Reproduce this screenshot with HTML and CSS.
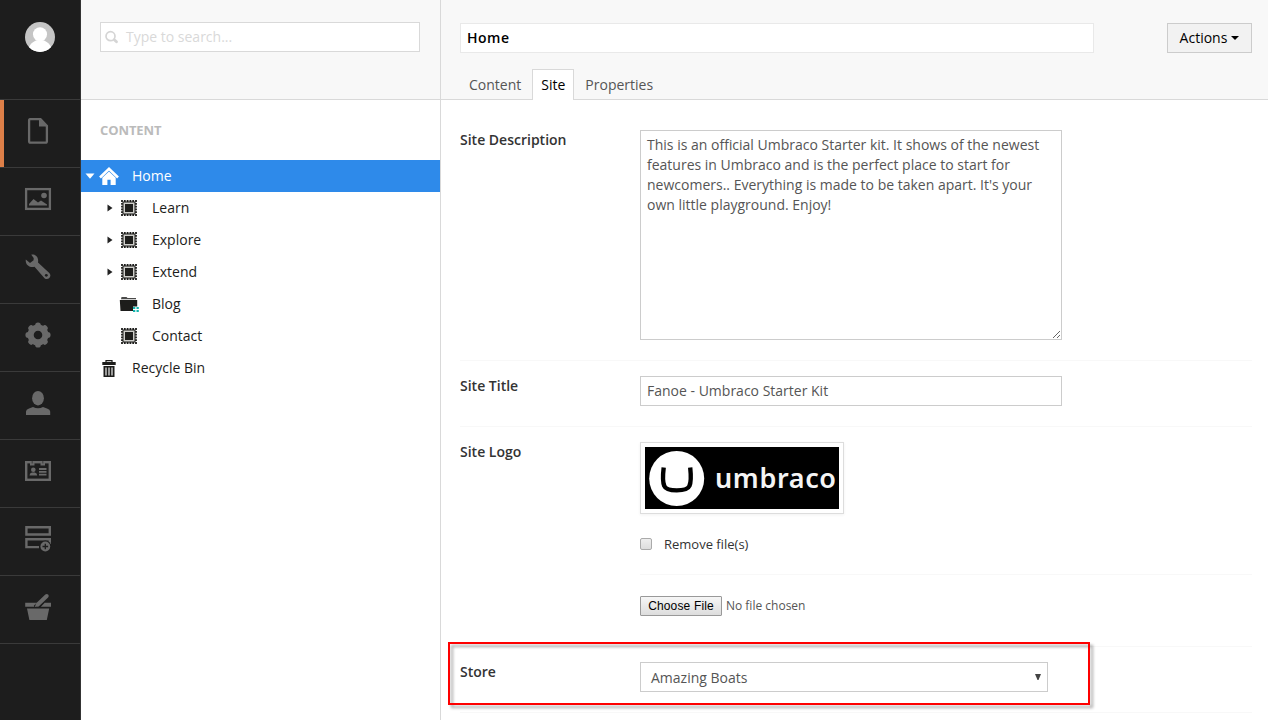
FILE: index.html
```html
<!DOCTYPE html>
<html lang="en">
<head>
<meta charset="utf-8">
<title>Home - Content</title>
<link rel="stylesheet" href="styles.css">
</head>
<body>
<div class="app">
  <nav class="rail">
    <div class="rail-user">
      <svg class="avatar" viewBox="0 0 30 30"><defs><clipPath id="disc"><circle cx="15" cy="15" r="15"/></clipPath></defs><g clip-path="url(#disc)"><rect width="30" height="30" fill="#c5c5c5"/><path d="M3 30C3 24 6.500 20.500 11.300 18.300L18.700 18.300C23.500 20.500 27 24 27 30Z" fill="#fff"/><ellipse cx="15" cy="12.200" rx="7" ry="7" fill="#fff"/></g></svg>
    </div>
    <a class="rail-item active"><svg class="rail-icon" viewBox="0 0 28 28"><path d="M6 2.200H16.500L22.900 9V24.200Q22.900 25.600 21.500 25.600H6.500Q5.100 25.600 5.100 24.200V3.200Q5.100 2.200 6 2.200Z" fill="none" stroke="#696969" stroke-width="2.300"/><path d="M15 1.500L23.500 9.500H18L15 9.500Z" fill="#696969"/></svg></a>
    <a class="rail-item"><svg class="rail-icon" viewBox="0 0 28 28"><rect x="2.100" y="4.100" width="23.800" height="19.800" fill="none" stroke="#696969" stroke-width="2.300"/><circle cx="20" cy="10.500" r="2.800" fill="#696969"/><path d="M5 20.500V19L9.500 14L14 17.500L17 15.500L23 19.500V20.500Z" fill="#696969"/></svg></a>
    <a class="rail-item"><svg class="rail-icon" viewBox="0 0 28 28"><path d="M7.300 1.700C11.500 1 15 4.500 14 9.500L25.300 20C28.500 23.500 24 28 20.500 25.300L10.500 13.800C5.500 15 1 11.500 1.800 6.500L6 10L9.600 7.200L9.700 5Z" fill="#696969"/><circle cx="22.300" cy="22.300" r="1.400" fill="#1d1d1d"/></svg></a>
    <a class="rail-item"><svg class="rail-icon" viewBox="0 0 28 28"><circle cx="14" cy="14" r="7.400" fill="none" stroke="#696969" stroke-width="6.200"/><g stroke="#696969" stroke-width="5.800" stroke-linecap="round"><path d="M14 4.300V6M14 22V23.700M4.300 14H6M22 14H23.700M7.200 7.200L8 8M20 20L20.800 20.800M7.200 20.800L8 20M20 8L20.800 7.200"/></g></svg></a>
    <a class="rail-item"><svg class="rail-icon" viewBox="0 0 28 28"><ellipse cx="14" cy="9.200" rx="5.900" ry="7.200" fill="#696969"/><path d="M2 26V22.500Q2 20.500 5 19.500L9 18Q14 20.500 19 18L23 19.500Q26.200 20.500 26.200 22.500V26Z" fill="#696969"/></svg></a>
    <a class="rail-item"><svg class="rail-icon" viewBox="0 0 28 28"><rect x="2.200" y="5.200" width="23.600" height="17.600" fill="none" stroke="#696969" stroke-width="2.400"/><path d="M6 4H10.500V8.500H6ZM16.500 4H21V8.500H16.500Z" fill="#696969"/><path d="M7.500 4V6.500H9V4ZM18 4V6.500H19.500V4Z" fill="#1d1d1d" opacity=".4"/><circle cx="9.300" cy="12.800" r="2.300" fill="#696969"/><path d="M5.500 18.500Q5.500 16 8 15.500H10.800Q13.200 16 13.200 18.500ZM15 11H22.500V12.900H15ZM15 13.900H22.500V15.700H15ZM15 16.700H22.500V18.500H15Z" fill="#696969"/></svg></a>
    <a class="rail-item"><svg class="rail-icon" viewBox="0 0 28 28"><path d="M2.400 2.300H25.800V9.500H2.400ZM25.800 19V14.300H2.400V22.100H15" fill="none" stroke="#696969" stroke-width="2.400"/><circle cx="21.300" cy="21.500" r="5.900" fill="#1d1d1d"/><circle cx="21.300" cy="21.500" r="4.900" fill="#696969"/><path d="M18.500 21.500H24.100M21.300 18.700V24.300" stroke="#1d1d1d" stroke-width="1.300"/></svg></a>
    <a class="rail-item"><svg class="rail-icon" viewBox="0 0 28 28"><path d="M1.200 9.700H14L10 13.800H1.200ZM20.700 9.700H27V13.800H16.900ZM3 15.500H25.200L22.800 27H5.400Z" fill="#696969"/><path d="M10.500 13.500L22.700 1.500" stroke="#1d1d1d" stroke-width="2"/><path d="M22.700 3L13.800 11.500" stroke="#696969" stroke-width="4" stroke-linecap="round"/><path d="M10.800 14L12.300 10L15.300 13Z" fill="#696969"/></svg></a>
  </nav>

  <aside class="tree-panel">
    <div class="tree-head">
      <div class="search"><svg class="search-icon" viewBox="0 0 14 14"><circle cx="5.500" cy="6.200" r="4.500" fill="none" stroke="#d5d5d5" stroke-width="1.700"/><path d="M9.300 9.700L11.500 11.800" stroke="#d5d5d5" stroke-width="2.800" stroke-linecap="round"/></svg><span>Type to search...</span></div>
    </div>
    <h5 class="tree-title">CONTENT</h5>
    <ul class="tree">
      <li class="node root selected"><svg class="caret" viewBox="0 0 10 10"><path d="M.500 2.500H9.500L5 7.700Z" fill="#fff"/></svg><svg class="node-icon" viewBox="0 0 20 20"><path d="M1 11.500L10 2.800L19 11.500" fill="none" stroke="#fff" stroke-width="2.600"/><path d="M3.300 11.800L10 5.500L16.700 11.800V19H11.600V13.800H8.400V19H3.300Z" fill="#fff"/></svg><span>Home</span></li>
      <li class="node child"><svg class="caret" viewBox="0 0 10 10"><path d="M2.500 1.500L7.500 5L2.500 8.500Z" fill="#222"/></svg><svg class="node-icon" viewBox="0 0 20 20"><use href="#stamp"/></svg><span>Learn</span></li>
      <li class="node child"><svg class="caret" viewBox="0 0 10 10"><path d="M2.500 1.500L7.500 5L2.500 8.500Z" fill="#222"/></svg><svg class="node-icon" viewBox="0 0 20 20"><use href="#stamp"/></svg><span>Explore</span></li>
      <li class="node child"><svg class="caret" viewBox="0 0 10 10"><path d="M2.500 1.500L7.500 5L2.500 8.500Z" fill="#222"/></svg><svg class="node-icon" viewBox="0 0 20 20"><use href="#stamp"/></svg><span>Extend</span></li>
      <li class="node child"><i class="caret"></i><svg class="node-icon" viewBox="0 0 20 20"><path d="M2.500 3H7.500L8.500 4H17V5.200H2Z" fill="#1d1d1b" opacity=".8"/><path d="M.800 6H18.200V12.500H14V17H1.500Z" fill="#1d1d1b"/><path d="M14 13H16.300V15H14ZM17.500 13H19.800V15H17.500ZM14 16H16.300V18H14ZM17.500 16H19.800V18H17.500Z" fill="#14b5ad"/></svg><span>Blog</span></li>
      <li class="node child"><i class="caret"></i><svg class="node-icon" viewBox="0 0 20 20"><g id="stamp"><rect x="4" y="4" width="12" height="12" fill="#d0d0cc" stroke="#1d1d1b" stroke-width="1"/><rect x="3" y="3" width="14" height="14" fill="none" stroke="#1d1d1b" stroke-width="1.800" stroke-dasharray="1.800 1" stroke-dashoffset=".9"/><rect x="6" y="6" width="8" height="8" fill="#1d1d1b"/></g></svg><span>Contact</span></li>
      <li class="node root"><i class="caret"></i><svg class="node-icon" viewBox="0 0 20 20"><path d="M7 4V2.600H13V4" fill="none" stroke="#1d1d1b" stroke-width="1.200"/><path d="M3.300 4H16.700V7H3.300ZM4.500 8H15.500V19H4.500Z" fill="#1d1d1b"/><path d="M7 9.500V17.500M10 9.500V17.500M13 9.500V17.500" stroke="#ddd" stroke-width="1.300"/></svg><span>Recycle Bin</span></li>
    </ul>
  </aside>

  <main class="editor">
    <header class="editor-head">
      <div class="title-row">
        <div class="name-field">Home</div>
        <button class="actions">Actions<i class="down"></i></button>
      </div>
      <div class="tabs"><a class="tab">Content</a><a class="tab current">Site</a><a class="tab">Properties</a></div>
    </header>
    <form class="form">
      <div class="row">
        <label class="label">Site Description</label>
        <textarea class="field area">This is an official Umbraco Starter kit. It shows of the newest features in Umbraco and is the perfect place to start for newcomers.. Everything is made to be taken apart. It's your own little playground. Enjoy!</textarea>
      </div>
      <div class="row">
        <label class="label">Site Title</label>
        <div class="field text">Fanoe - Umbraco Starter Kit</div>
      </div>
      <div class="row">
        <label class="label">Site Logo</label>
        <div class="upload">
          <div class="thumb"><svg class="logo" viewBox="0 0 194 62"><rect width="194" height="62" fill="#000"/><circle cx="31.700" cy="31.500" r="27.500" fill="#fff"/><path d="M18.700 20.500C17.800 28 17.500 35 19.300 39C21.500 44.800 42 44.800 44.400 39C46.300 35 46 28 45.200 20.500" fill="none" stroke="#000" stroke-width="4.400"/><text x="70" y="41" textLength="121" lengthAdjust="spacing" class="logo-text">umbraco</text></svg></div>
          <div class="remove"><span class="check"></span><span>Remove file(s)</span></div>
          <div class="choose"><button type="button" class="choose-btn">Choose File</button><span>No file chosen</span></div>
        </div>
      </div>
      <div class="row">
        <label class="label">Store</label>
        <div class="field select"><span>Amazing Boats</span><svg class="select-arrow" viewBox="0 0 6 7"><path d="M0 0H6L3.500 6H2.500Z" fill="#444"/></svg></div>
      </div>
    </form>
  </main>
</div>
<div class="highlight"></div>
</body>
</html>
```
FILE: styles.css
```css
* { box-sizing: border-box; }
body {
  margin: 0;
  font: 14px/20px "Open Sans", "Noto Sans", sans-serif;
  color: #1d1d1b;
  background: #fff;
  overflow: hidden;
}
.app { display: flex; height: 720px; }

.rail { flex: none; width: 81px; background: #1d1d1d; border-right: 1px solid #343434; }
.rail-user { height: 100px; padding: 22px 0 0 25px; border-bottom: 1px solid #3a3a3a; }
.avatar { display: block; width: 30px; height: 30px; }
.rail-item { display: block; height: 68px; padding: 17px 0 0 24px; border-bottom: 1px solid #3a3a3a; }
.rail-item.active { padding-left: 24px; background: linear-gradient(#dd7f48, #dd7f48) 0 0 / 4px 100% no-repeat padding-box; }
.rail-icon { display: block; width: 28px; height: 28px; }

.tree-panel { flex: none; width: 360px; border-right: 1px solid #d9d9d9; }
.tree-head { height: 100px; padding: 22px 20px 0 19px; background: #f8f8f8; border-bottom: 1px solid #d9d9d9; }
.search {
  display: flex;
  align-items: center;
  gap: 7px;
  height: 30px;
  padding-left: 4px;
  background: #fff;
  border: 1px solid #d9d9d9;
  color: #d9d9d9;
}
.search-icon { width: 14px; height: 14px; }
.tree-title { margin: 20px 0 20px 19px; font-size: 13px; line-height: 20px; font-weight: 700; letter-spacing: -.1px; color: #bbb; }
.tree { margin: 0; padding: 0; list-style: none; }
.node { display: flex; align-items: center; height: 32px; }
.root { padding-left: 4px; }
.child { padding-left: 24px; }
.caret { width: 10px; height: 10px; margin-right: 4px; }
.node-icon { width: 20px; height: 20px; margin-right: 13px; }
.selected { background: #2e8aea; color: #fff; }

.editor { flex: 1; min-width: 0; }
.editor-head {
  display: flex;
  flex-direction: column;
  justify-content: space-between;
  height: 100px;
  padding: 23px 16px 0 19px;
  background: #f8f8f8;
  border-bottom: 1px solid #d9d9d9;
}
.title-row { display: flex; justify-content: space-between; }
.name-field {
  width: 634px;
  height: 30px;
  padding: 4px 6px;
  background: #fff;
  border: 1px solid #e9e9e9;
  font-weight: 600;
  letter-spacing: .5px;
  color: #000;
}
.actions {
  display: flex;
  align-items: center;
  justify-content: center;
  gap: 4px;
  width: 85px;
  height: 30px;
  padding: 0;
  background: #f2f2f2;
  border: 1px solid #ccc;
  font: inherit;
  color: #000;
}
.down { border: 4px solid transparent; border-top-color: #000; border-bottom: 0; }
.tabs { display: flex; margin-bottom: -1px; }
.tab { height: 31px; padding: 5px 8px 0; border: 1px solid transparent; border-bottom: 0; margin-right: 2px; color: #555; }
.tab.current { background: #fff; border-color: #d9d9d9; color: #000; }

.form { padding: 30px 16px 0 19px; }
.row { display: flex; padding-bottom: 20px; border-bottom: 1px solid #f8f8f8; margin-bottom: 15px; }
.label { flex: none; width: 180px; font-weight: 600; color: #333; }
.field { display: block; width: 422px; border: 1px solid #ccc; background: #fff; color: #555; font: inherit; }
.area { height: 210px; margin: 0; padding: 4px 6px; outline: 0; }
.text { height: 30px; padding: 4px 6px; }
.select { display: flex; justify-content: space-between; width: 408px; height: 30px; padding: 5px 6px 3px 10px; }
.select-arrow { width: 6px; height: 7px; margin-top: 6px; }
.upload { flex: 1; }
.thumb { width: 204px; height: 72px; padding: 4px; border: 1px solid #ddd; box-shadow: 0 1px 3px rgba(0, 0, 0, .055); }
.logo { display: block; width: 194px; height: 62px; }
.logo-text { font: 600 27px "Noto Sans", sans-serif; fill: #f4f4f4; }
.remove {
  display: flex;
  align-items: center;
  gap: 12px;
  height: 61px;
  padding-bottom: 1px;
  border-bottom: 1px solid #f8f8f8;
  font-size: 13px;
  color: #333;
}
.check { width: 12px; height: 12px; border: 1px solid #aaa; border-radius: 2px; background: linear-gradient(#eee, #ddd); }
.choose { display: flex; align-items: center; gap: 4px; height: 20px; margin: 21px 0 10px; font-size: 12px; color: #555; }
.choose-btn {
  width: 82px;
  height: 20px;
  padding: 0;
  border: 1px solid #999;
  border-radius: 1px;
  background: linear-gradient(#f6f6f6, #ddd);
  font: 12px/16px "Liberation Sans", sans-serif;
  letter-spacing: .15px;
  color: #000;
}

/* Call-out drawn over the form */
.highlight {
  position: absolute;
  left: 448px;
  top: 642px;
  width: 642px;
  height: 63px;
  border: 2px solid #fe0000;
  filter: drop-shadow(3px 3px 1.5px rgba(0, 0, 0, .35));
  pointer-events: none;
}
```
